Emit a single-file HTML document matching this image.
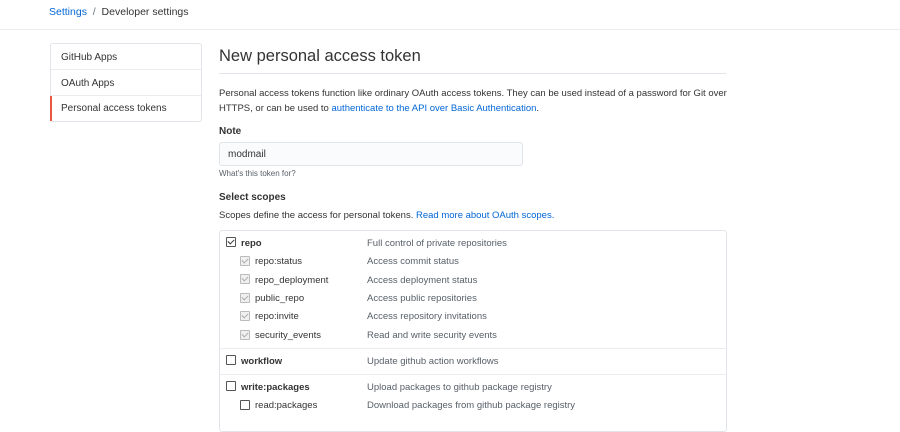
<!DOCTYPE html>
<html><head><style>
body{margin:0;width:900px;height:414px;overflow:hidden;background:#fff;font-family:"Liberation Sans",sans-serif;color:#333;font-size:9.5px;position:relative}
.a{position:absolute;white-space:nowrap}
.l{color:#0366d6}
.cb{position:absolute;width:8px;height:8px;border:1px solid #555;background:#fff;border-radius:1px}
.cb.g{border-color:#bbb;background:#f0f0f0}
.cb.c::after{content:"";position:absolute;left:2px;top:0px;width:3px;height:5px;border:solid #333;border-width:0 1.2px 1.2px 0;transform:rotate(45deg)}
.cb.g.c::after{border-color:#aaa}
.d{color:#586069}
</style></head><body>
<div class="a" style="left:0;top:0;width:900px;height:29px;border-bottom:1px solid #ececec"></div>
<div class="a" style="left:49px;top:6px;font-size:10.5px"><span class="l">Settings</span> <span style="color:#6a737d">&nbsp;/&nbsp;</span> Developer settings</div>
<div class="a" style="left:50px;top:43px;width:150px;height:77px;border:1px solid #e1e4e8;border-radius:3px"></div>
<div class="a" style="left:51px;top:69px;width:150px;border-top:1px solid #ececec"></div>
<div class="a" style="left:51px;top:95px;width:150px;border-top:1px solid #ececec"></div>
<div class="a" style="left:50px;top:96px;width:2px;height:25px;background:#e9573f"></div>
<div class="a" style="left:61px;top:52px;font-size:10px">GitHub Apps</div>
<div class="a" style="left:61px;top:78px;font-size:10px">OAuth Apps</div>
<div class="a" style="left:61px;top:103px;font-size:10px">Personal access tokens</div>
<div class="a" style="left:219px;top:47px;font-size:16.5px">New personal access token</div>
<div class="a" style="left:219px;top:73px;width:507px;border-top:1px solid #e1e4e8"></div>
<div class="a" style="left:219px;top:87px;line-height:14.5px">Personal access tokens function like ordinary OAuth access tokens. They can be used instead of a password for Git over<br>HTTPS, or can be used to <span class="l">authenticate to the API over Basic Authentication</span>.</div>
<div class="a" style="left:219px;top:126px;font-weight:bold;font-size:10px">Note</div>
<div class="a" style="left:219px;top:142px;width:302px;height:22px;border:1px solid #e1e4e8;border-radius:3px;background:#fafbfc"></div>
<div class="a" style="left:228px;top:149px;font-size:10px">modmail</div>
<div class="a d" style="left:219px;top:169px;font-size:8px">What's this token for?</div>
<div class="a" style="left:219px;top:192px;font-weight:bold;font-size:10px">Select scopes</div>
<div class="a" style="left:219px;top:210px">Scopes define the access for personal tokens. <span class="l">Read more about OAuth scopes.</span></div>
<div class="a" style="left:219px;top:230px;width:506px;height:200px;border:1px solid #e1e4e8;border-radius:3px"></div>
<div class="a" style="left:220px;top:348px;width:506px;border-top:1px solid #ececec"></div>
<div class="a" style="left:220px;top:374px;width:506px;border-top:1px solid #ececec"></div>
<div class="cb c" style="left:226px;top:237px"></div><div class="a" style="left:241px;top:238px;font-weight:bold">repo</div><div class="a d" style="left:367px;top:238px">Full control of private repositories</div>
<div class="cb g c" style="left:240px;top:256px"></div><div class="a" style="left:255px;top:256px">repo:status</div><div class="a d" style="left:367px;top:256px">Access commit status</div>
<div class="cb g c" style="left:240px;top:274px"></div><div class="a" style="left:255px;top:275px">repo_deployment</div><div class="a d" style="left:367px;top:275px">Access deployment status</div>
<div class="cb g c" style="left:240px;top:293px"></div><div class="a" style="left:255px;top:293px">public_repo</div><div class="a d" style="left:367px;top:293px">Access public repositories</div>
<div class="cb g c" style="left:240px;top:311px"></div><div class="a" style="left:255px;top:311px">repo:invite</div><div class="a d" style="left:367px;top:311px">Access repository invitations</div>
<div class="cb g c" style="left:240px;top:330px"></div><div class="a" style="left:255px;top:330px">security_events</div><div class="a d" style="left:367px;top:330px">Read and write security events</div>
<div class="cb" style="left:226px;top:355px"></div><div class="a" style="left:241px;top:356px;font-weight:bold">workflow</div><div class="a d" style="left:367px;top:356px">Update github action workflows</div>
<div class="cb" style="left:226px;top:381px"></div><div class="a" style="left:241px;top:382px;font-weight:bold">write:packages</div><div class="a d" style="left:367px;top:382px">Upload packages to github package registry</div>
<div class="cb" style="left:240px;top:400px"></div><div class="a" style="left:255px;top:400px">read:packages</div><div class="a d" style="left:367px;top:400px">Download packages from github package registry</div>
</body></html>
